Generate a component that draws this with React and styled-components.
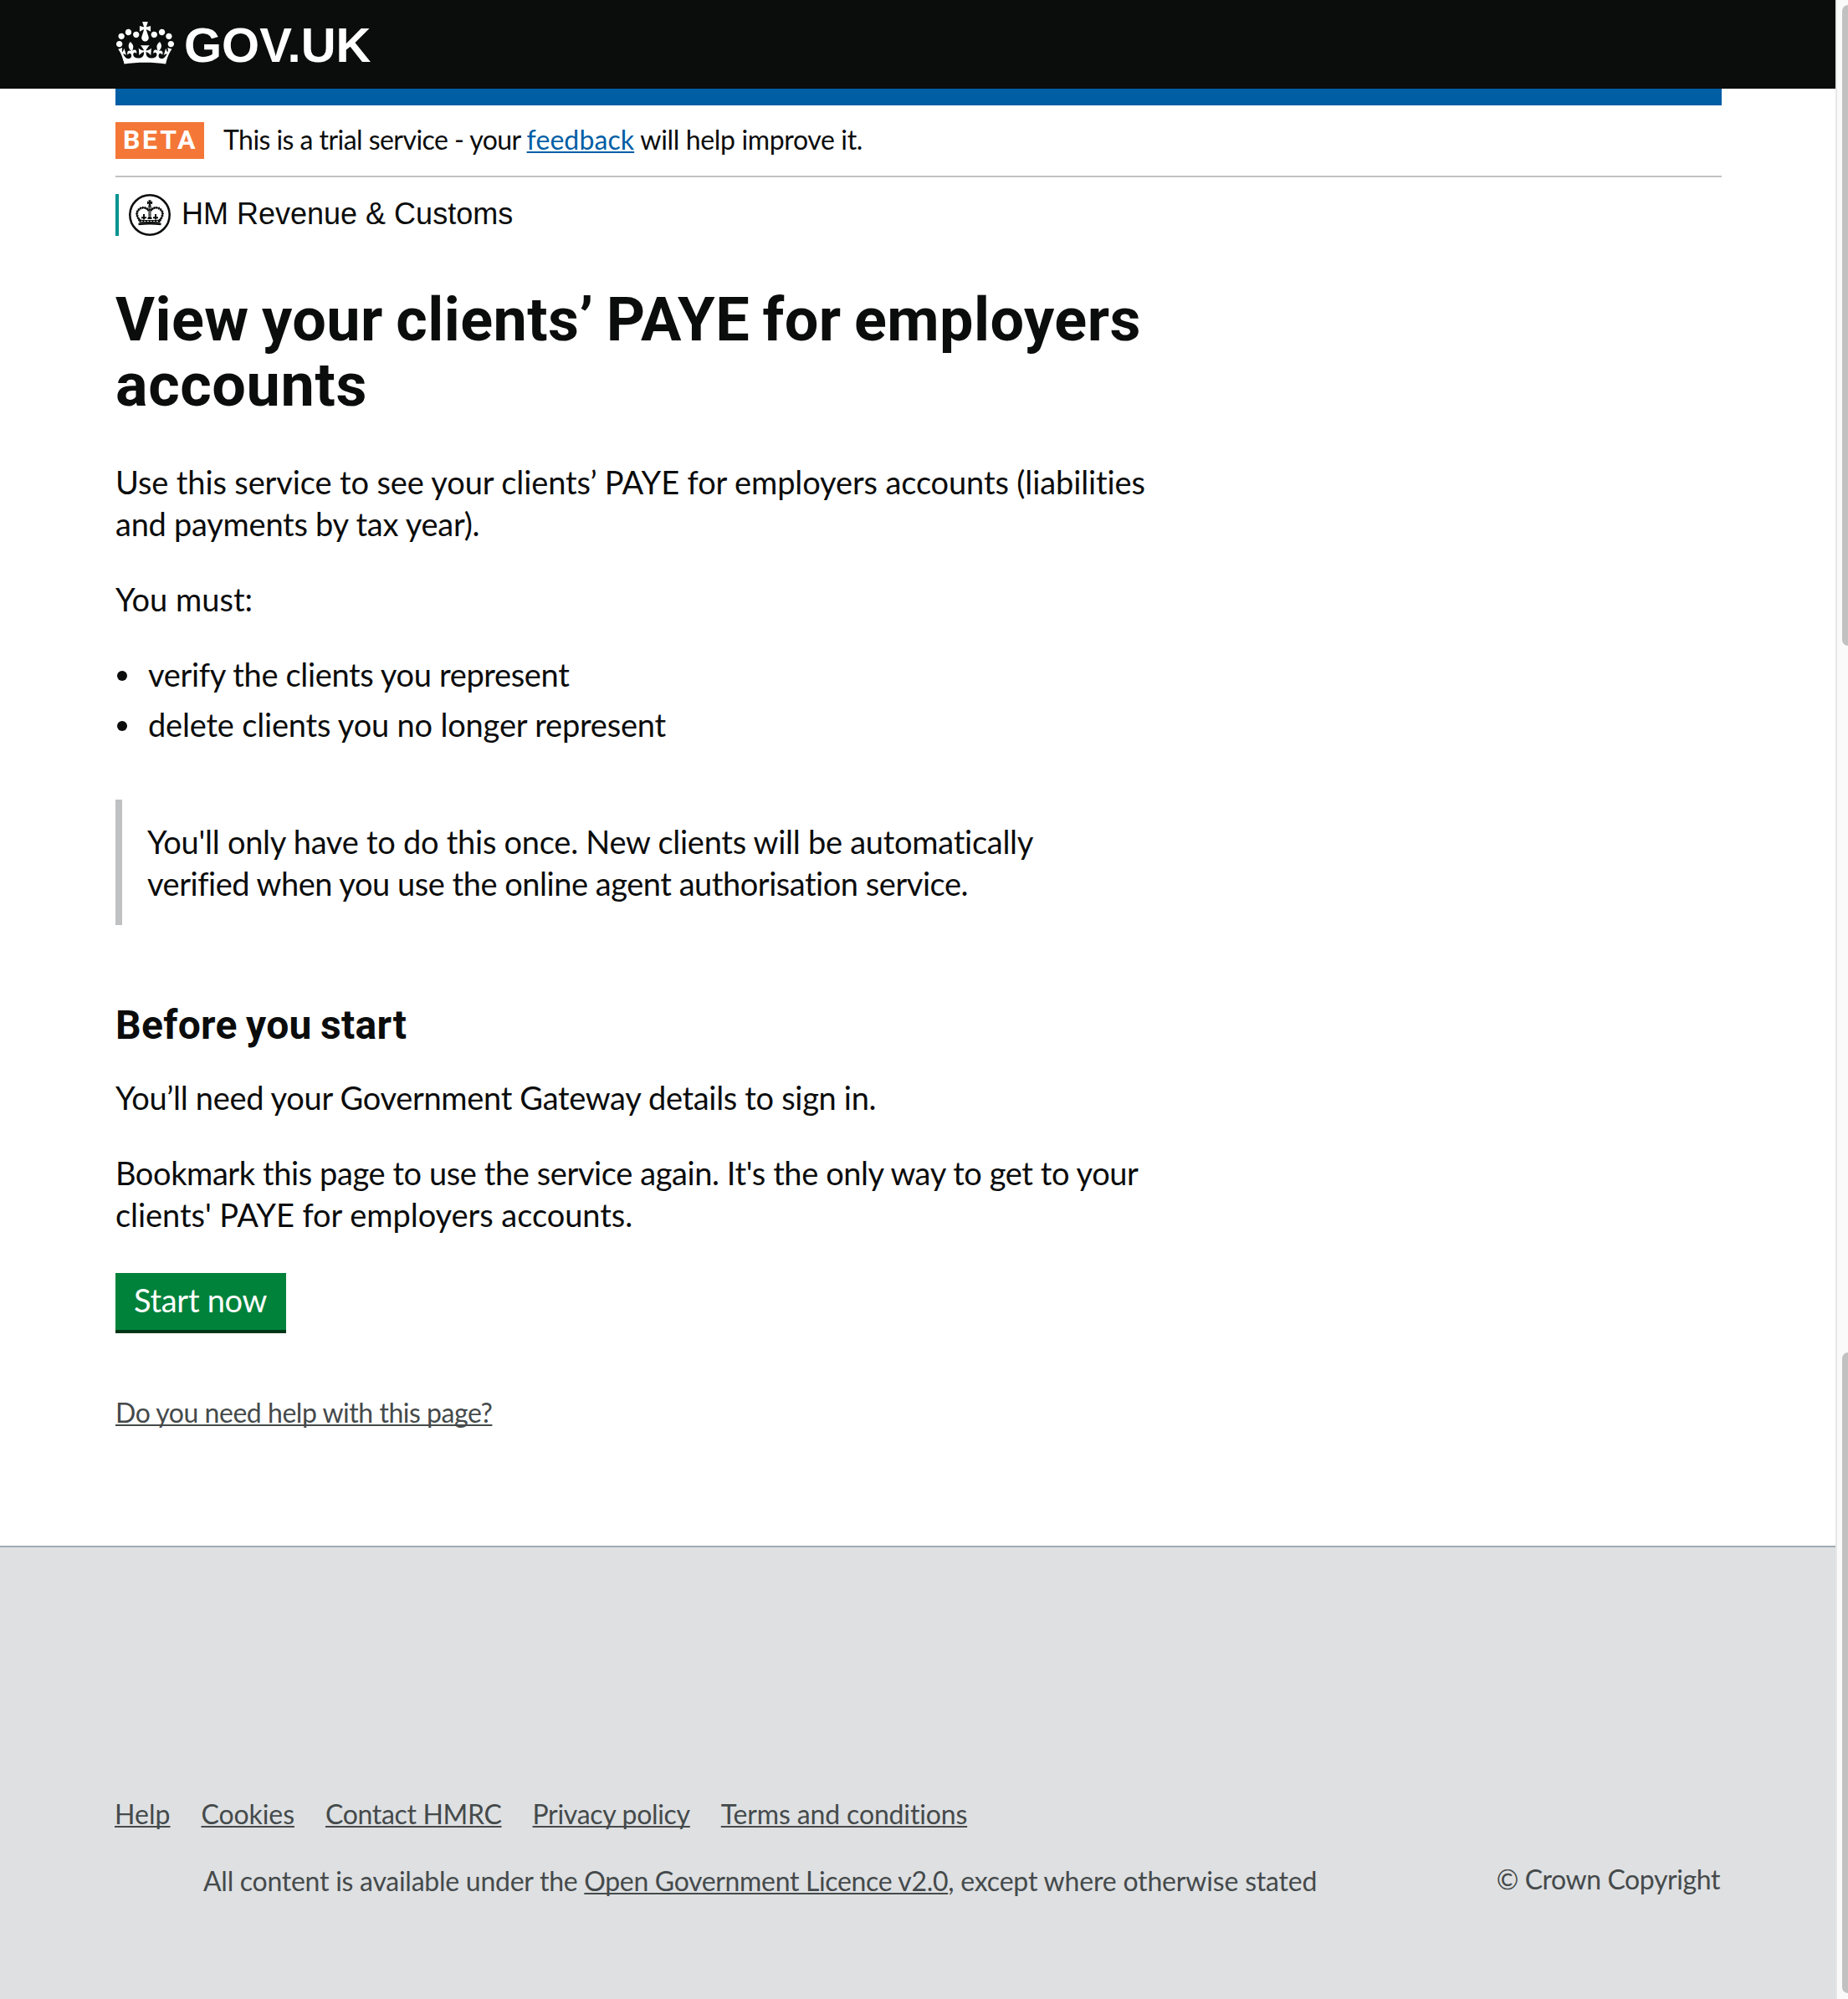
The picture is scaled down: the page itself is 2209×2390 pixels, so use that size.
import React from 'react';
import styled, { createGlobalStyle } from 'styled-components';

const BODY = 'Lato, "Noto Sans", sans-serif';
const HEADING = 'Roboto, "Noto Sans", sans-serif';
const INK = '#0b0c0c';

const GlobalStyle = createGlobalStyle`
  * { box-sizing: border-box; }
  body { margin: 0; background: #fff; }
  h1, h2, p, ul { margin: 0; padding: 0; }
`;

const Window = styled.div`
  display: flex;
  width: 2209px;
  height: 2390px;
  overflow: hidden;
  color: ${INK};
  font-family: ${BODY};
  font-variant-ligatures: none;
`;

const Page = styled.div`
  display: flex;
  flex-direction: column;
  width: 2194px;
  flex: none;
`;

const ScrollTrack = styled.div`
  display: flex;
  flex-direction: column;
  justify-content: space-between;
  flex: 1;
  padding: 6px 0 7px 6px;
  border-left: 2px solid #e7e7e7;
  background: #fafafa;
`;

const ScrollThumb = styled.div`
  width: 14px;
  height: 766px;
  border-radius: 7px;
  background: #c1c1c1;
`;

const Header = styled.header`
  display: flex;
  align-items: flex-start;
  height: 106px;
  padding: 26px 138px 0;
  background: ${INK};
  color: #fff;
`;

const CrownIcon = styled.svg`
  display: block;
  width: 69px;
  height: 51px;
  margin: 0 12px 0 1px;
`;

const Wordmark = styled.span`
  font: 700 58px/52px "Liberation Sans", Arial, sans-serif;
  margin-top: 2px;
`;

const Container = styled.main`
  width: 1920px;
  margin: 0 138px;
  height: 1742px;
`;

const BlueBar = styled.div`
  height: 20px;
  background: #005ea5;
`;

const PhaseBanner = styled.div`
  display: flex;
  height: 86px;
  padding-top: 20px;
  border-bottom: 2px solid #bfc1c3;
  font-size: 32px;
  line-height: 42px;
`;

const PhaseTag = styled.strong`
  width: 106px;
  height: 44px;
  margin-right: 23px;
  padding-left: 9px;
  background: #f47738;
  color: #fff;
  font: 700 32px/42px ${HEADING};
  letter-spacing: 2.7px;
`;

const Text = styled.span`
  letter-spacing: ${p => p.$ls}px;
  white-space: pre;
`;

const Line = styled(Text)`
  display: block;
`;

const Link = styled.a`
  color: ${p => p.$color || '#454a4b'};
  letter-spacing: ${p => p.$ls}px;
  text-decoration: underline;
  text-decoration-thickness: 2px;
  text-decoration-skip-ink: none;
  text-underline-offset: 2px;
  white-space: pre;
`;

const Organisation = styled.div`
  display: flex;
  align-items: center;
  height: 50px;
  margin-top: 20px;
  padding-left: 12px;
  border-left: 4px solid #009390;
  font: 36px/48px "Liberation Sans", Arial, sans-serif;
`;

const OrganisationName = styled.span`
  padding-bottom: 2px;
`;

const CrestIcon = styled.svg`
  display: block;
  width: 50px;
  height: 50px;
  margin-right: 13px;
`;

const Title = styled.h1`
  margin-top: 62px;
  font: 700 72px/78px ${HEADING};
  word-spacing: -3px;
`;

const Paragraph = styled.p`
  margin-top: ${p => p.$top || 40}px;
  font-size: 38px;
  line-height: 50px;
`;

const BulletList = styled.ul`
  display: flex;
  flex-direction: column;
  gap: 10px;
  margin-top: 40px;
  list-style: none;
  font-size: 38px;
  line-height: 50px;
`;

const Bullet = styled.li`
  display: flex;
  align-items: center;
  padding-left: 2px;
  &::before {
    content: '';
    width: 12px;
    height: 12px;
    margin: 4px 25px 0 0;
    border-radius: 50%;
    background: ${INK};
  }
`;

const Inset = styled.div`
  height: 150px;
  margin-top: 65px;
  padding: 25px 0 0 30px;
  border-left: 8px solid #bfc1c3;
  font-size: 38px;
  line-height: 50px;
`;

const Subheading = styled.h2`
  margin-top: 90px;
  font: 700 48px/60px ${HEADING};
  word-spacing: -2px;
`;

const StartButton = styled.button`
  display: block;
  width: 204px;
  height: 68px;
  margin: 45px 0 0;
  padding: 7px 0 11px 22px;
  border: 0;
  background: #00823b;
  box-shadow: 0 4px 0 #003618;
  color: #fff;
  font: 400 38px/50px ${BODY};
  text-align: left;
`;

const HelpRow = styled.div`
  margin-top: 79px;
  font-size: 32px;
  line-height: 40px;
`;

const Footer = styled.footer`
  flex: 1;
  padding: 299px 138px 0 137px;
  border-top: 2px solid #a1acb2;
  background: #dee0e2;
  color: #454a4b;
  font-size: 32px;
  line-height: 40px;
`;

const FooterLinks = styled.nav`
  display: flex;
  gap: 37px;
`;

const FooterMeta = styled.div`
  display: flex;
  justify-content: space-between;
  align-items: flex-start;
  margin-top: 38px;
  padding-left: 106px;
`;

const Licence = styled.p`
  padding-top: 2px;
`;

const Crown = () => (
  <CrownIcon viewBox="0 0 132 97" preserveAspectRatio="none" fill="#fff">
    <path d="M25 30.2c3.5 1.5 7.7-.2 9.1-3.7 1.5-3.6-.2-7.8-3.9-9.2-3.6-1.4-7.6.3-9.1 3.9-1.4 3.5.3 7.5 3.9 9zM9 39.5c3.6 1.5 7.8-.2 9.2-3.7 1.5-3.6-.2-7.8-3.9-9.1-3.6-1.5-7.6.2-9.1 3.8-1.4 3.5.3 7.5 3.8 9zM4.4 57.2c3.5 1.5 7.7-.2 9.1-3.8 1.5-3.6-.2-7.7-3.9-9.1-3.5-1.5-7.6.3-9.1 3.8-1.4 3.5.3 7.6 3.9 9.1zm38.3-21.4c3.5 1.5 7.7-.2 9.1-3.8 1.5-3.6-.2-7.7-3.9-9.1-3.6-1.5-7.6.3-9.1 3.8-1.3 3.6.4 7.7 3.9 9.1zm64.4-5.6c-3.6 1.5-7.8-.2-9.1-3.7-1.5-3.6.2-7.8 3.8-9.2 3.6-1.4 7.7.3 9.2 3.9 1.3 3.5-.4 7.5-3.9 9zm15.9 9.3c-3.6 1.5-7.7-.2-9.1-3.7-1.5-3.6.2-7.8 3.7-9.1 3.6-1.5 7.7.2 9.2 3.8 1.5 3.5-.3 7.5-3.8 9zm4.7 17.7c-3.6 1.5-7.8-.2-9.2-3.8-1.5-3.6.2-7.7 3.9-9.1 3.6-1.5 7.7.3 9.2 3.8 1.3 3.5-.4 7.6-3.9 9.1zM89.3 35.8c-3.6 1.5-7.8-.2-9.2-3.8-1.4-3.6.2-7.7 3.9-9.1 3.6-1.5 7.7.3 9.2 3.8 1.4 3.6-.3 7.7-3.9 9.1zM69.7 17.7l8.9 4.7V9.3l-8.9 2.8c-.2-.3-.5-.6-.9-.9L72.4 0H59.6l3.5 11.2c-.3.3-.6.5-.9.9l-8.8-2.8v13.1l8.8-4.7c.3.3.6.7.9.9l-5 15.4v.1c-.2.8-.4 1.6-.4 2.4 0 4.1 3.1 7.5 7 8.1h.2c.3 0 .7.1 1 .1.4 0 .7 0 1-.1h.2c4-.6 7.1-4.1 7.1-8.1 0-.8-.1-1.7-.4-2.4V34l-5.1-15.4c.4-.2.7-.6 1-.9zM66 92.8c16.9 0 32.8 1.1 47.1 3.2 4-16.9 8.9-26.7 14-33.5l-9.6-3.4c1 4.9 1.1 7.2 0 10.2-1.5-1.4-3-4.3-4.2-8.7L108.6 76c2.8-2 5-3.2 7.5-3.3-4.4 9.4-10 11.9-13.6 11.2-4.3-.8-6.3-4.6-5.6-7.9 1-4.7 5.7-5.9 8-.5 4.3-8.7-3-11.4-7.6-8.8 7.1-7.2 7.9-13.5 2.1-21.1-8 6.1-8.1 12.3-4.5 20.8-4.7-5.4-12.1-2.5-9.5 6.2 3.4-5.2 7.9-2 7.2 3.1-.6 4.3-6.4 7.8-13.5 7.2-10.3-.9-10.9-8-11.2-13.8 2.5-.5 7.1 1.8 11 7.3L80.2 60c-4.1 4.4-8 5.3-12.3 5.4 1.4-4.4 8-11.6 8-11.6H55.5s6.4 7.2 7.9 11.6c-4.2-.1-8-1-12.3-5.4l1.4 16.4c3.9-5.5 8.5-7.7 10.9-7.3-.3 5.8-.9 12.8-11.1 13.8-7.2.6-12.9-2.9-13.5-7.2-.7-5 3.8-8.3 7.1-3.1 2.7-8.7-4.6-11.6-9.4-6.2 3.7-8.5 3.6-14.7-4.6-20.8-5.8 7.6-5 13.9 2.2 21.1-4.7-2.6-11.9.1-7.7 8.8 2.3-5.5 7.1-4.2 8.1.5.7 3.3-1.3 7.1-5.7 7.9-3.5.7-9-1.8-13.5-11.2 2.5.1 4.7 1.3 7.5 3.3l-4.7-15.4c-1.2 4.4-2.7 7.2-4.3 8.7-1.1-3-.9-5.3 0-10.2l-9.5 3.4c5 6.9 9.9 16.7 14 33.5 14.8-2.1 30.8-3.2 47.7-3.2z" />
  </CrownIcon>
);

const Crest = () => (
  <CrestIcon viewBox="0 0 50 50" fill="none" stroke={INK}>
    <circle cx="25" cy="25" r="23.7" strokeWidth="2.5" />
    <path d="M23.2 7.2h3.6l-.9 2.1 2.2-.7v3.6l-2.2-.7.9 3.2h-3.6l.9-3.2-2.2.7V8.600l2.200.7z" fill={INK} stroke="none" />
    <path d="M13 31.500C9.500 27 8.500 22 11.500 19c3.500-4 10-3.500 12 1M37 31.500C40.500 27 41.500 22 38.500 19c-3.500-4-10-3.500-12 1" strokeWidth="1.600" />
    <path d="M13 31.500C9.500 27 8.500 22 11.500 19c3.500-4 10-3.500 12 1M37 31.500C40.500 27 41.500 22 38.500 19c-3.500-4-10-3.500-12 1" strokeWidth="3" strokeDasharray="1.400 1.300" />
    <path d="M25 15v13" strokeWidth="3.400" strokeDasharray="1.600 .7" />
    <path d="M18 24v6.500M32 24v6.500M15 28.200h6M29 28.200h6M22.500 29h5" strokeWidth="2" />
    <path d="M11.500 28.500q2 2.500 5.500 2.500h16q3.500 0 5.500-2.500L37.200 34.500H12.800z" fill={INK} stroke="none" />
    <path d="M14.500 32.600h21" stroke="#fff" strokeWidth="1" strokeDasharray="2 1.700" />
    <path d="M11.500 36q13.500-1.400 27 0" strokeWidth="2.600" />
  </CrestIcon>
);

export default function App() {
  return (
    <>
      <GlobalStyle />
      <Window>
        <Page>
          <Header>
            <Crown />
            <Wordmark>GOV.UK</Wordmark>
          </Header>
          <Container>
            <BlueBar />
            <PhaseBanner>
              <PhaseTag>BETA</PhaseTag>
              <Text $ls={-0.55}>This is a trial service - your </Text>
              <Link href="#" $color="#005ea5" $ls={0.1}>feedback</Link>
              <Text $ls={-0.35}> will help improve it.</Text>
            </PhaseBanner>
            <Organisation>
              <Crest />
              <OrganisationName>HM Revenue &amp; Customs</OrganisationName>
            </Organisation>
            <Title>
              <Line $ls={0.45}>View your clients’ PAYE for employers</Line>
              <Line $ls={0.6}>accounts</Line>
            </Title>
            <Paragraph $top={51}>
              <Line $ls={-0.12}>Use this service to see your clients’ PAYE for employers accounts (liabilities</Line>
              <Line $ls={-0.26}>and payments by tax year).</Line>
            </Paragraph>
            <Paragraph><Line $ls={0}>You must:</Line></Paragraph>
            <BulletList>
              <Bullet><Text $ls={-0.35}>verify the clients you represent</Text></Bullet>
              <Bullet><Text $ls={-0.19}>delete clients you no longer represent</Text></Bullet>
            </BulletList>
            <Inset>
              <Line $ls={-0.26}>You'll only have to do this once. New clients will be automatically</Line>
              <Line $ls={-0.47}>verified when you use the online agent authorisation service.</Line>
            </Inset>
            <Subheading><Line $ls={0.32}>Before you start</Line></Subheading>
            <Paragraph $top={31}>
              <Line $ls={-0.32}>You’ll need your Government Gateway details to sign in.</Line>
            </Paragraph>
            <Paragraph>
              <Line $ls={-0.41}>Bookmark this page to use the service again. It's the only way to get to your</Line>
              <Line $ls={-0.05}>clients' PAYE for employers accounts.</Line>
            </Paragraph>
            <StartButton><Text $ls={-0.3}>Start now</Text></StartButton>
            <HelpRow><Link href="#" $ls={-0.47}>Do you need help with this page?</Link></HelpRow>
          </Container>
          <Footer>
            <FooterLinks>
              <Link href="#" $ls={0.04}>Help</Link>
              <Link href="#" $ls={-0.08}>Cookies</Link>
              <Link href="#" $ls={-0.33}>Contact HMRC</Link>
              <Link href="#" $ls={-0.31}>Privacy policy</Link>
              <Link href="#" $ls={-0.15}>Terms and conditions</Link>
            </FooterLinks>
            <FooterMeta>
              <Licence>
                <Text $ls={-0.26}>All content is available under the </Text>
                <Link href="#" $ls={-0.34}>Open Government Licence v2.0</Link>
                <Text $ls={-0.18}>, except where otherwise stated</Text>
              </Licence>
              <Text $ls={-0.42}>© Crown Copyright</Text>
            </FooterMeta>
          </Footer>
        </Page>
        <ScrollTrack>
          <ScrollThumb />
          <ScrollThumb />
        </ScrollTrack>
      </Window>
    </>
  );
}
